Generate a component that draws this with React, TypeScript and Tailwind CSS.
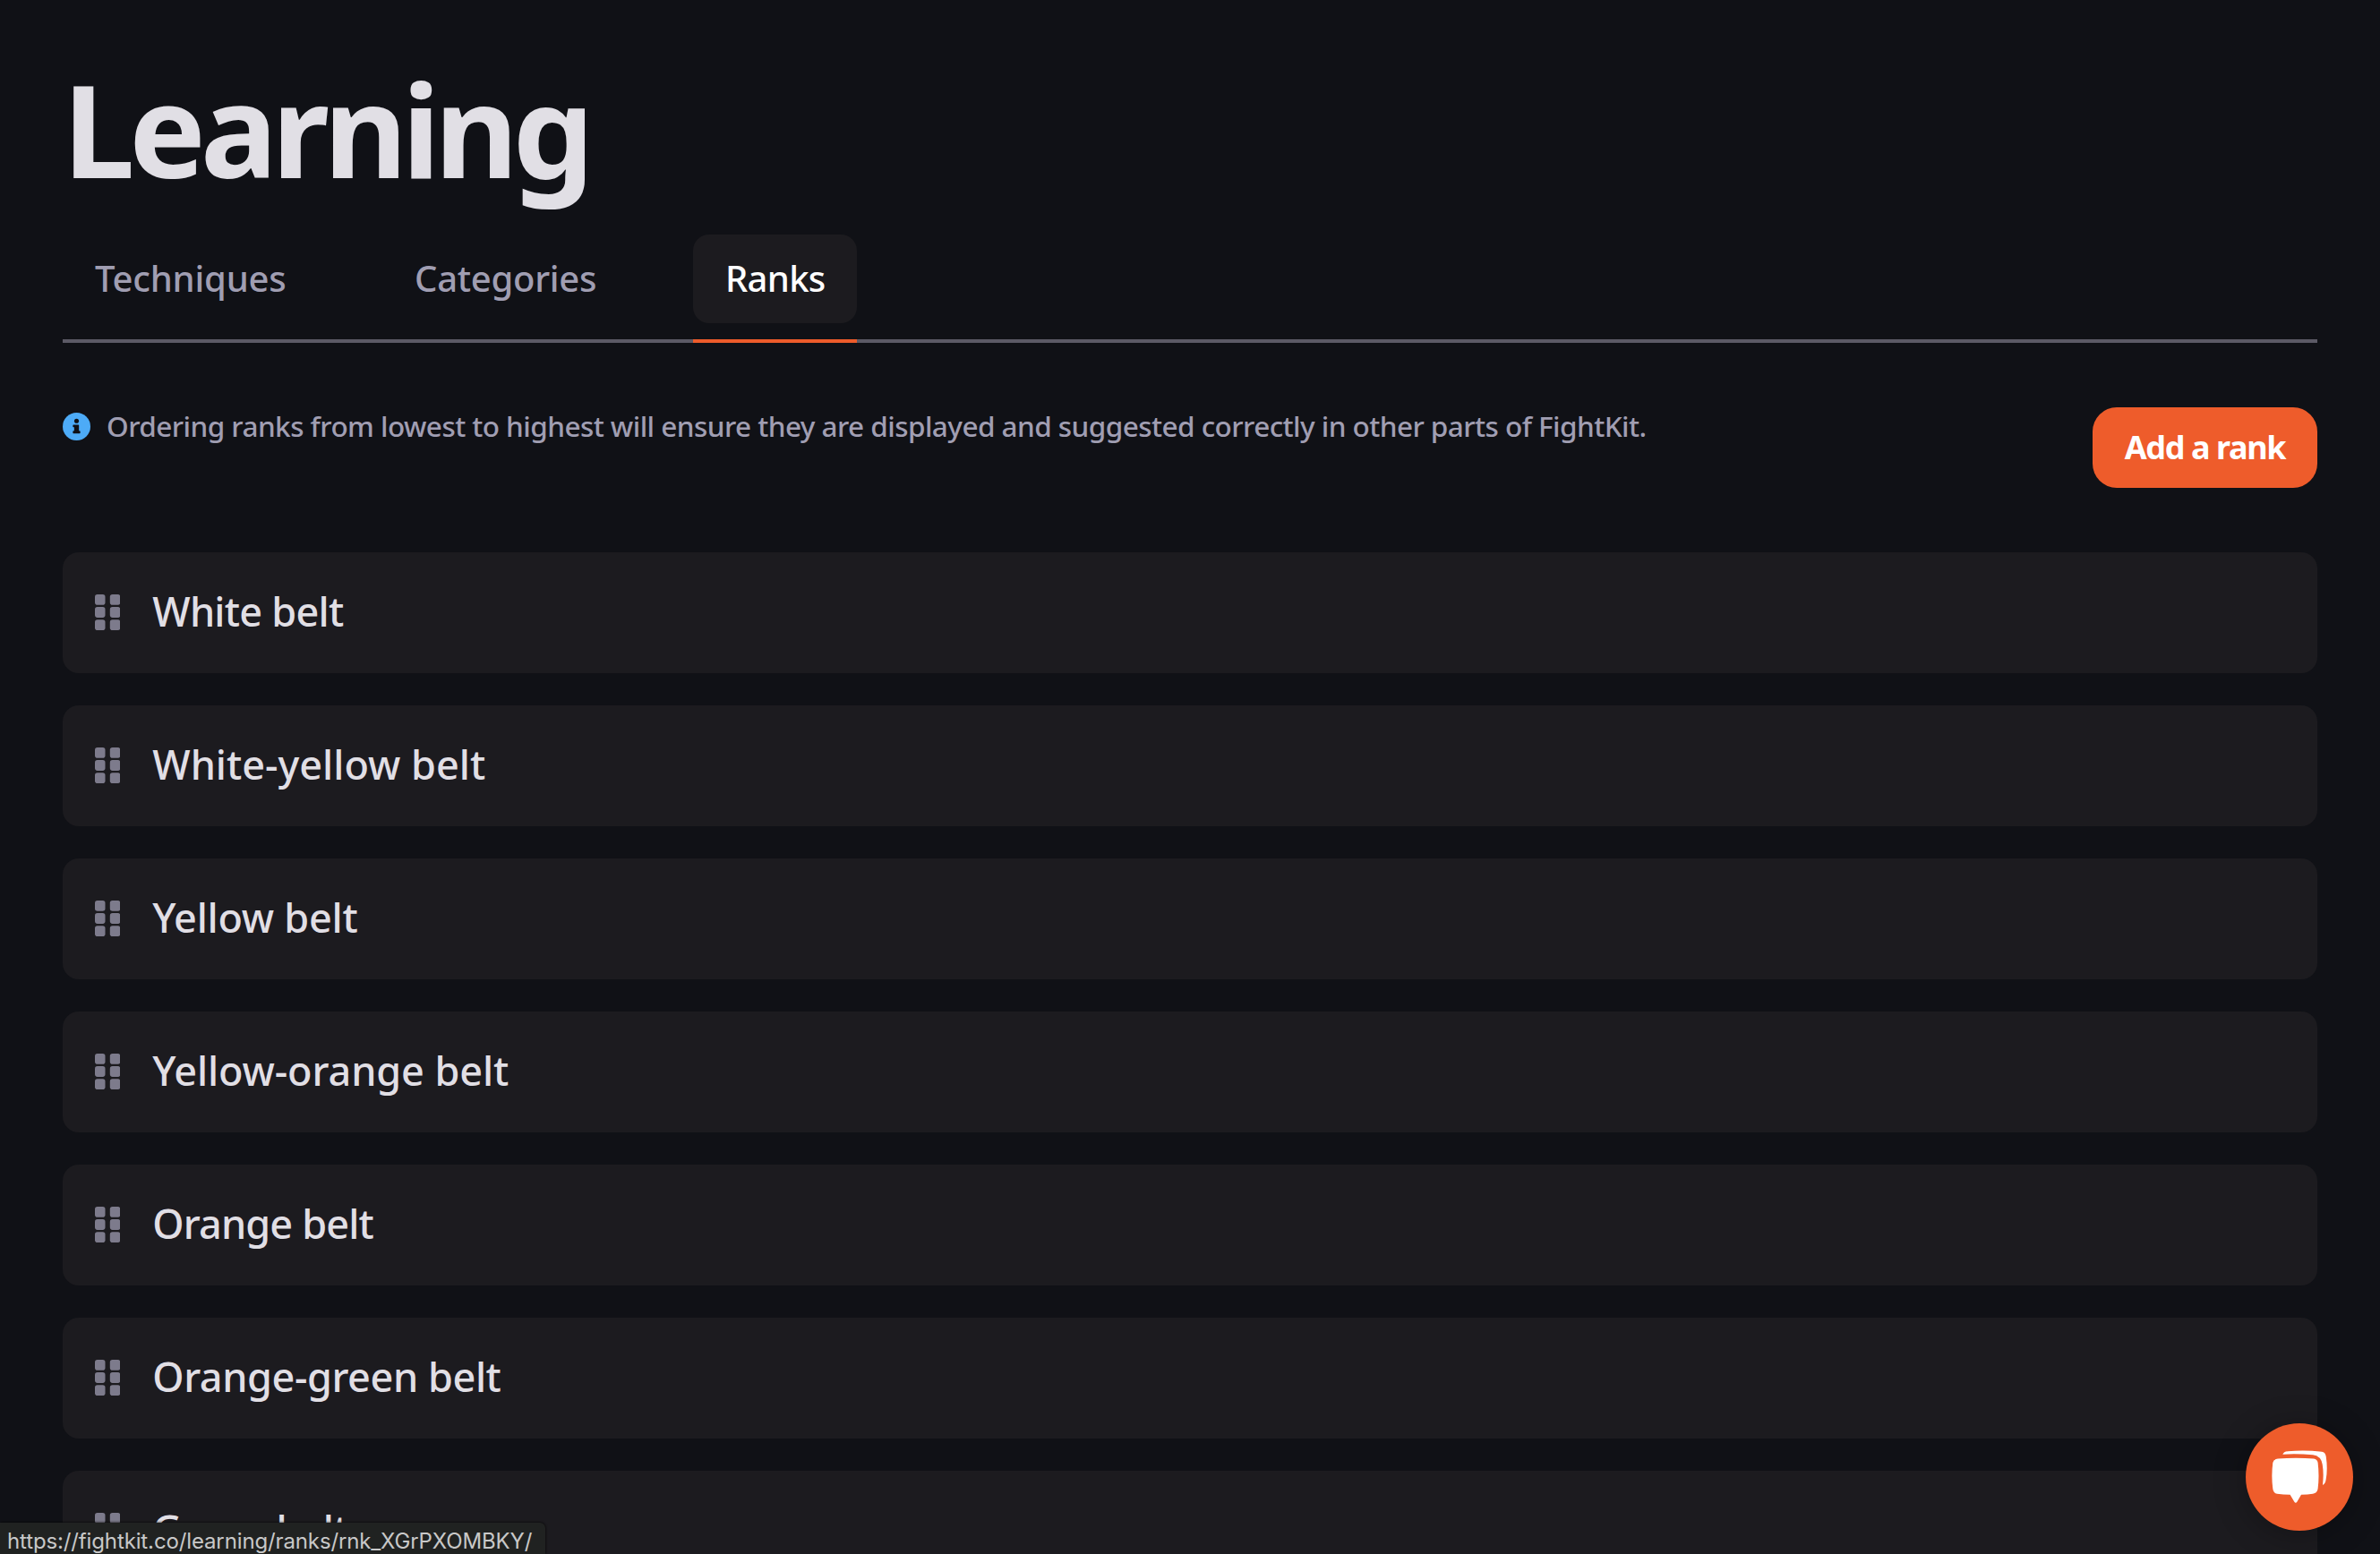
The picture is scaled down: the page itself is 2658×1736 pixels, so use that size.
import clsx from "clsx";

const tabs = [
  { name: "Techniques", width: "w-[285px]", text: "tracking-[-0.2px]" },
  { name: "Categories", width: "w-[275px]", text: "tracking-[-0.27px]" },
  { name: "Ranks", width: "w-[183px]", text: "tracking-[-0.7px]" },
];

const ranks = [
  { name: "White belt", text: "tracking-[-0.75px]" },
  { name: "White-yellow belt", text: "tracking-[0px]" },
  { name: "Yellow belt", text: "tracking-[-0.25px]" },
  { name: "Yellow-orange belt", text: "tracking-[-0.1px]" },
  { name: "Orange belt", text: "tracking-[-0.85px]" },
  { name: "Orange-green belt", text: "tracking-[-0.42px]" },
  { name: "Green belt", text: "tracking-[-0.7px]" },
];

const GripIcon = () => (
  <svg viewBox="0 0 28.3 40" className="mb-px h-10 w-[28.3px] shrink-0 fill-[#7d7b8c]">
    {[0, 14.1, 28.2].map((y) => (
      <g key={y}>
        <rect x="0" y={y} width="11.5" height="11.8" rx="2.8" />
        <rect x="16.8" y={y} width="11.5" height="11.8" rx="2.8" />
      </g>
    ))}
  </svg>
);

const InfoIcon = () => (
  <svg viewBox="0 0 512 512" className="size-[31px] shrink-0">
    <circle cx="256" cy="256" r="256" fill="#4dabf7" />
    <circle cx="256" cy="152" r="42" fill="#101116" />
    <path
      d="M212 222h76a12 12 0 0 1 12 12v102h12a12 12 0 0 1 12 12v24a12 12 0 0 1-12 12H200a12 12 0 0 1-12-12v-24a12 12 0 0 1 12-12h12v-66h-12a12 12 0 0 1-12-12v-24a12 12 0 0 1 12-12z"
      fill="#101116"
    />
  </svg>
);

const ChatIcon = () => (
  <svg viewBox="0 0 62 60" className="h-[60px] w-[62px] fill-white">
    <path d="M7 9.5Q27 8 47 9.5Q51 10 51.6 14Q53.4 29 51.6 43Q51 48 46 48.7Q40 49.6 33 49.7L28.5 57.5Q26.8 60 25.2 57.5L20.6 49.7Q13 49.6 6 48.7Q2 48 1.3 43Q-.6 29 1.3 14Q2 10 7 9.5Z" />
    <path d="M12.3 4.7C14 2 15 1.5 18 1.2Q37 -.5 56 1.7Q60 2.2 60.7 7Q62.8 21 60.6 33Q60 37.5 57 39Q58.4 26 56.7 16Q55.2 6.5 46 5.3Q29 3.8 12.3 4.7Z" />
  </svg>
);

const App = () => {
  return (
    <div className="relative h-[1736px] w-[2658px] overflow-hidden bg-[#101116] px-[70px] pt-[60px] font-['Noto_Sans',sans-serif] text-[#e1dfe5]">
      <h1 className="h-[202px] text-[144px] leading-[166px] font-bold tracking-[-6.4px]">
        Learning
      </h1>

      {/* Tabs */}
      <nav className="flex h-[121px] gap-[72px] border-b-4 border-[#5c5a66]">
        {tabs.map((tab) => (
          <div
            key={tab.name}
            className={clsx(
              "h-[121px] shrink-0",
              tab.width,
              tab.name === "Ranks" && "border-b-4 border-[#ee5c2b]"
            )}
          >
            <div
              className={clsx(
                "h-[99px] rounded-[18px] px-9 text-[40px] leading-[97px] font-medium whitespace-nowrap",
                tab.text,
                tab.name === "Ranks" ? "bg-[#1c1b1f] text-white" : "text-[#a09eb2]"
              )}
            >
              {tab.name}
            </div>
          </div>
        ))}
      </nav>

      {/* Info + action */}
      <div className="mt-[72px] flex items-start justify-between">
        <div className="flex items-center gap-[18px] pt-1.5 text-[#a09eb2]">
          <InfoIcon />
          <p className="pb-0.5 text-[31.5px] leading-[29px] font-medium tracking-[-0.555px] whitespace-nowrap">
            Ordering ranks from lowest to highest will ensure they are displayed
            and suggested correctly in other parts of FightKit.
          </p>
        </div>
        <button className="h-[90px] w-[251px] rounded-[27px] bg-[#ee5c2b] text-[36px] font-bold tracking-[-1.4px] whitespace-nowrap text-white">
          Add a rank
        </button>
      </div>

      {/* Ranks */}
      <ul className="mt-[72px] flex flex-col gap-9">
        {ranks.map((rank) => (
          <li
            key={rank.name}
            className="flex h-[135px] shrink-0 items-center gap-9 rounded-[18px] bg-[#1c1b1f] px-9 text-[45px] font-medium"
          >
            <GripIcon />
            <span className={clsx("pb-[3px]", rank.text)}>{rank.name}</span>
          </li>
        ))}
      </ul>

      {/* Chat launcher */}
      <button className="absolute top-[1590px] left-[2508px] flex size-[120px] items-center justify-center rounded-full bg-[#ee5c2b] shadow-[0_4px_36px_rgba(0,0,0,0.3)]">
        <ChatIcon />
      </button>

      {/* Link preview */}
      <div className="absolute bottom-0 left-0 h-[35px] w-[609px] rounded-tr-[6px] bg-[#202221] pt-[7px] pl-2 font-['Inter',sans-serif] text-[24px] leading-[27px] tracking-[-0.13px] whitespace-nowrap text-[#c8c8c8] shadow-[0_0_3px_#000]">
        https://fightkit.co/learning/ranks/rnk_XGrPXOMBKY/
      </div>
    </div>
  );
};

export default App;
